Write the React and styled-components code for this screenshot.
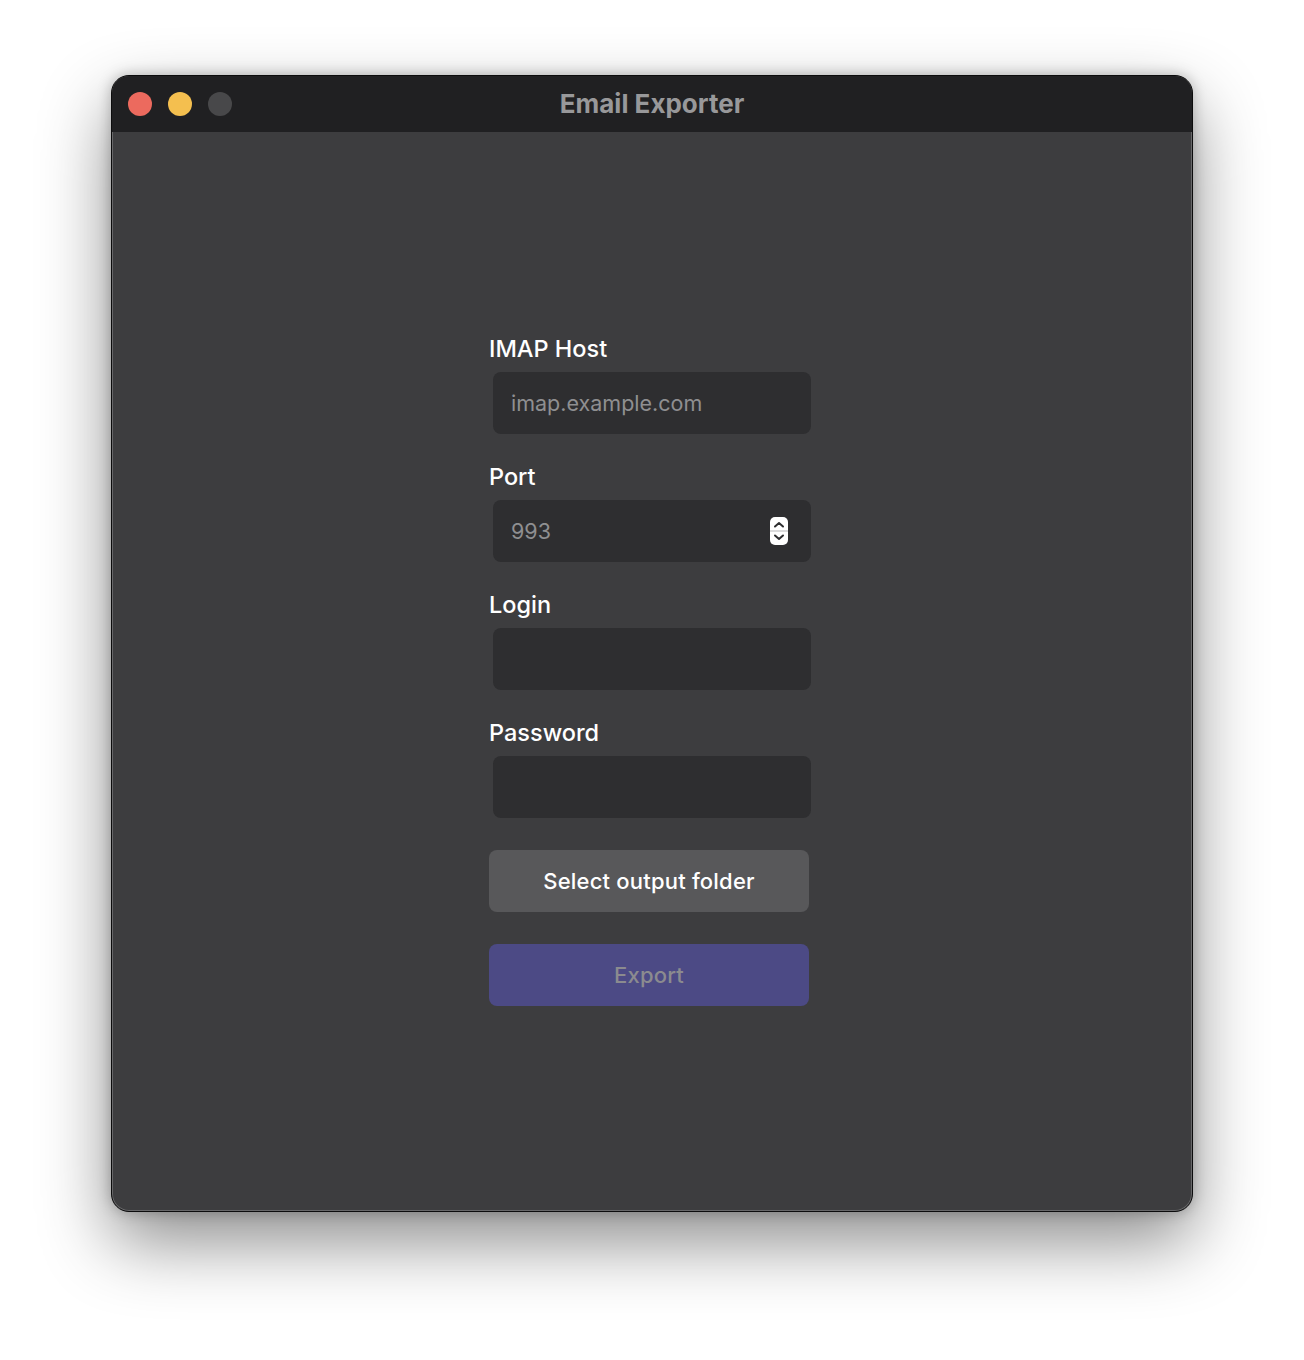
import React from "react"
import styled, { createGlobalStyle } from "styled-components"

const Global = createGlobalStyle`
  body {
    margin: 0;
    background: #ffffff;
    font-family: Inter, "Noto Sans", "Liberation Sans", sans-serif;
  }
`

const Page = styled.div`
  width: 1304px;
  height: 1360px;
  display: flex;
  justify-content: center;
  padding-top: 75px;
  box-sizing: border-box;
`

const Window = styled.div`
  width: 1082px;
  height: 1137px;
  box-sizing: border-box;
  border: 1px solid #0c0c0d;
  border-radius: 18px;
  overflow: hidden;
  display: flex;
  flex-direction: column;
  background: #3d3d3f;
  box-shadow: inset 0 0 0 1px rgba(255, 255, 255, 0.22), 0 30px 70px rgba(0, 0, 0, 0.45), 0 0 14px rgba(0, 0, 0, 0.25);
`

const TitleBar = styled.div`
  height: 56px;
  flex-shrink: 0;
  background: #202022;
  display: flex;
  align-items: center;
  position: relative;
  padding-left: 16px;
  gap: 16px;
`

const Light = styled.span`
  width: 24px;
  height: 24px;
  border-radius: 50%;
  background: ${p => p.color};
`

const Title = styled.div`
  position: absolute;
  left: 0;
  right: 0;
  text-align: center;
  font-size: 26px;
  font-weight: 700;
  color: #98989a;
  pointer-events: none;
  margin-top: -2px;
`

const Content = styled.div`
  flex: 1;
  display: flex;
  align-items: center;
  justify-content: center;
  padding: 0 4px 4px 0;
`

const Form = styled.div`
  width: 322px;
  display: flex;
  flex-direction: column;
`

const Label = styled.label`
  font-size: 23.5px;
  font-weight: 500;
  line-height: 30px;
  color: #ffffff;
  margin-top: ${p => (p.first ? "0" : "28px")};
  margin-bottom: 8px;
`

const Field = styled.div`
  margin-left: 4px;
  width: 318px;
  height: 62px;
  border-radius: 8px;
  background: #2e2e30;
  display: flex;
  align-items: center;
  justify-content: space-between;
  padding: 0 22px 0 18px;
  box-sizing: border-box;
  font-size: 21.5px;
  color: #8f8f91;
`

const Stepper = styled.svg`
  width: 20px;
  height: 28px;
`

const Button = styled.button`
  width: 320px;
  height: 62px;
  border: none;
  border-radius: 8px;
  margin-top: 32px;
  font-family: inherit;
  font-size: 22px;
  font-weight: 500;
  letter-spacing: 0.2px;
  background: ${p => (p.primary ? "#4c4a85" : "#58585a")};
  color: ${p => (p.primary ? "#8b8b8f" : "#ffffff")};
`

export default function App() {
  return (
    <Page>
      <Global />
      <Window>
        <TitleBar>
          <Light color="#ec6a5e" />
          <Light color="#f4bf4f" />
          <Light color="#48484a" />
          <Title>Email Exporter</Title>
        </TitleBar>
        <Content>
          <Form>
            <Label first>IMAP Host</Label>
            <Field>imap.example.com</Field>
            <Label>Port</Label>
            <Field>
              993
              <Stepper viewBox="0 0 20 28">
                <rect x="1" y="0" width="18" height="28" rx="5" fill="#ffffff" />
                <line x1="1" y1="14" x2="19" y2="14" stroke="#cfcfd1" strokeWidth="1.5" />
                <path d="M6 9.5 L10 6 L14 9.5" fill="none" stroke="#2e2e30" strokeWidth="2" strokeLinecap="round" strokeLinejoin="round" />
                <path d="M6 18.5 L10 22 L14 18.5" fill="none" stroke="#2e2e30" strokeWidth="2" strokeLinecap="round" strokeLinejoin="round" />
              </Stepper>
            </Field>
            <Label>Login</Label>
            <Field />
            <Label>Password</Label>
            <Field />
            <Button>Select output folder</Button>
            <Button primary>Export</Button>
          </Form>
        </Content>
      </Window>
    </Page>
  )
}
